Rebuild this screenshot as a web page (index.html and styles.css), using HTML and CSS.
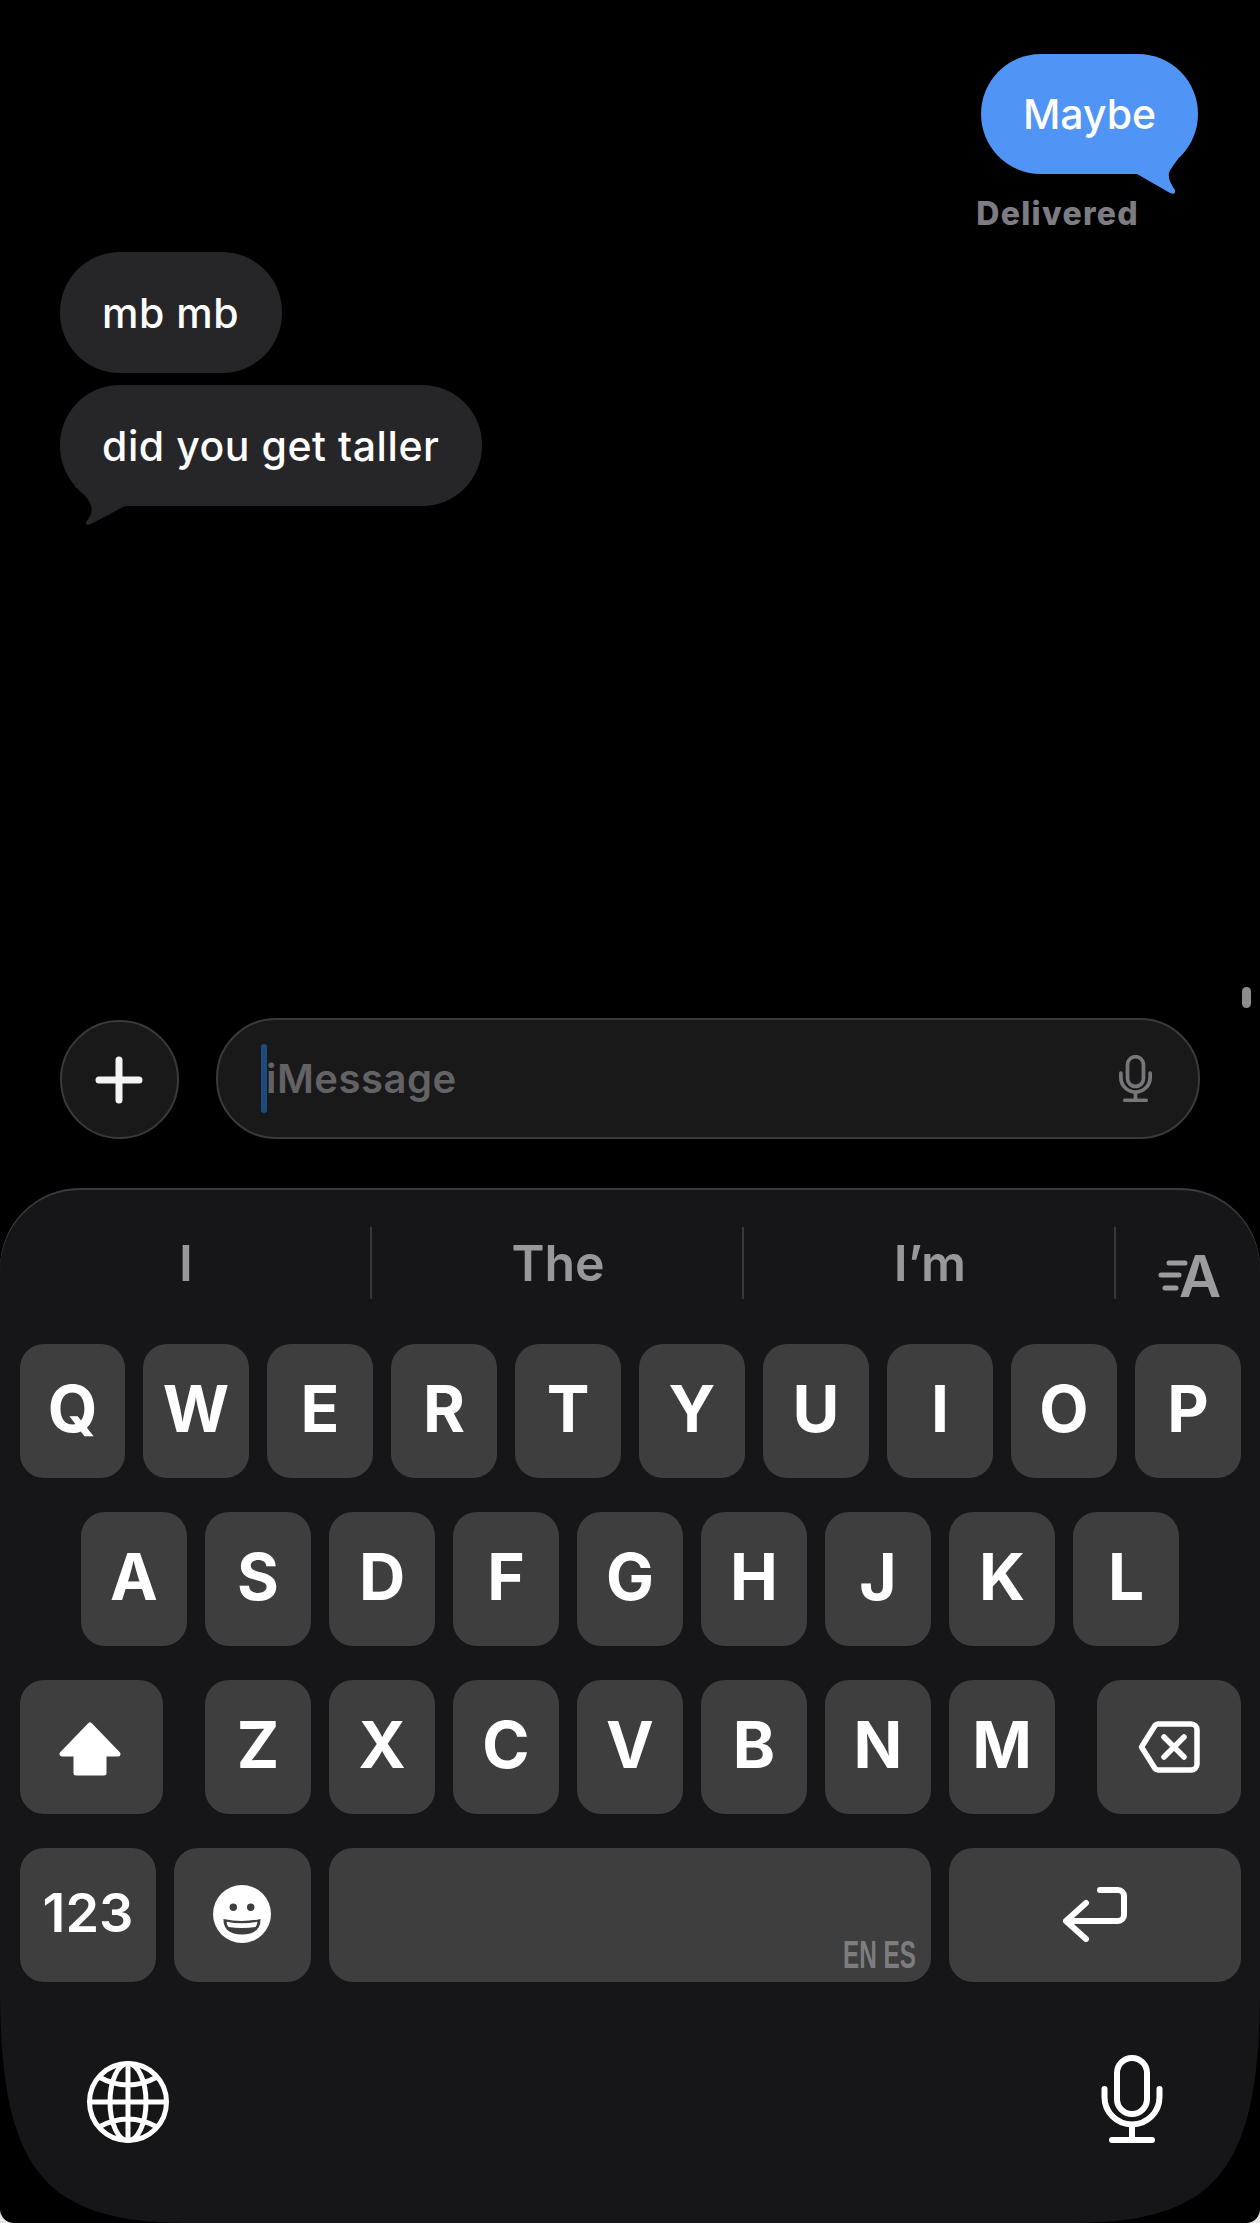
FILE: index.html
```html
<!DOCTYPE html>
<html lang="en">
<head>
<meta charset="utf-8">
<title>iMessage</title>
<link rel="stylesheet" href="styles.css">
</head>
<body>
<div class="screen">
  <div class="thread">
    <div class="bubble sent">Maybe
      <svg class="tail tail-sent" viewBox="0 0 70 52"><path d="M9 28 L42 47 Q48 49.500 47 44 Q37 30 43 23 Q46 18 50 13 L9 4 Z"/></svg>
    </div>
    <div class="status">Delivered</div>
    <div class="bubble received first">mb mb</div>
    <div class="bubble received">did you get taller
      <svg class="tail tail-received" viewBox="0 0 70 52"><path d="M65 30 L32 47.500 Q25 51 26 46 Q35 36 30 27 Q27 20 14 10 L65 10 Z"/></svg>
    </div>
  </div>
  <div class="scroll-thumb"></div>
  <div class="composer">
    <div class="plus">
      <svg class="plus-icon" viewBox="0 0 48 48"><path d="M24 4 V44 M4 24 H44"/></svg>
    </div>
    <div class="field">
      <span class="caret"></span>
      <span class="placeholder">iMessage</span>
      <svg class="mic mic-small" viewBox="0 0 62 88"><rect x="16" y="3" width="30" height="56" rx="15"/><path d="M3.500 34 V42 a27.500 27.500 0 0 0 55 0 V34 M31 70 V85 M11 85 H51"/></svg>
    </div>
  </div>
  <div class="keyboard">
    <div class="candidates">
      <div class="candidate">I</div>
      <div class="candidate">The</div>
      <div class="candidate">I’m</div>
      <div class="format">
        <svg class="format-icon" viewBox="0 0 62 46"><path d="M10 10 H26 M2 22 H20 M6 35 H17"/><text x="20" y="44">A</text></svg>
      </div>
    </div>
    <div class="rows">
      <div class="row">
        <div class="key key-first">Q</div><div class="key">W</div><div class="key">E</div><div class="key">R</div><div class="key">T</div><div class="key">Y</div><div class="key">U</div><div class="key">I</div><div class="key">O</div><div class="key">P</div>
      </div>
      <div class="row row-center">
        <div class="key">A</div><div class="key">S</div><div class="key">D</div><div class="key">F</div><div class="key">G</div><div class="key">H</div><div class="key">J</div><div class="key">K</div><div class="key">L</div>
      </div>
      <div class="row row-split">
        <div class="key key-shift">
          <svg class="shift-icon" viewBox="0 0 62 54"><path d="M31 3 L3 32 H17 V51 H45 V32 H59 Z"/></svg>
        </div>
        <div class="letters">
          <div class="key">Z</div><div class="key">X</div><div class="key">C</div><div class="key">V</div><div class="key">B</div><div class="key">N</div><div class="key">M</div>
        </div>
        <div class="key key-delete">
          <svg class="delete-icon" viewBox="0 0 62 52"><path d="M20 3 H53 a6 6 0 0 1 6 6 V43 a6 6 0 0 1 -6 6 H20 a4 4 0 0 1 -3 -1.500 L3.500 26 L17 4.500 a4 4 0 0 1 3 -1.500 Z"/><path d="M26 16 L46 36 M46 16 L26 36"/></svg>
        </div>
      </div>
      <div class="row">
        <div class="key key-num">123</div>
        <div class="key key-emoji">
          <svg class="emoji-icon" viewBox="-30 -30 60 60">
            <circle class="face" r="29"/>
            <circle class="eye" cx="-8.700" cy="-6.700" r="3.700"/>
            <circle class="eye" cx="8.700" cy="-6.700" r="3.700"/>
            <path class="eye" d="M-18.500 5 Q0 9 18.500 5 Q19 20 0 20.500 Q-19 20 -18.500 5 Z"/>
            <path class="face" d="M-15.500 7.800 Q0 10.800 15.500 7.800 Q15.200 11 13.500 13 Q0 15 -13.500 13 Q-15.200 11 -15.500 7.800 Z"/>
          </svg>
        </div>
        <div class="key key-space"><span class="lang">EN ES</span></div>
        <div class="key key-return">
          <svg class="return-icon" viewBox="0 0 65 55"><path d="M3 34 H55 a6 6 0 0 0 6 -6 V9 a6 6 0 0 0 -6 -6 H37 M23 16 L3 34 L23 52"/></svg>
        </div>
      </div>
    </div>
    <div class="tray">
      <svg class="globe" viewBox="-42 -42 84 84">
        <circle r="38.500"/>
        <ellipse rx="18" ry="38.500"/>
        <path d="M0 -38.500 V38.500 M-38.500 0 H38.500 M-29 -25 Q0 -9 29 -25 M-29 25 Q0 9 29 25"/>
      </svg>
      <svg class="mic mic-large" viewBox="0 0 62 88"><rect x="16" y="3" width="30" height="56" rx="15"/><path d="M3.500 34 V42 a27.500 27.500 0 0 0 55 0 V34 M31 70 V85 M11 85 H51"/></svg>
    </div>
  </div>
</div>
</body>
</html>
```
FILE: styles.css
```css
html {
  background: #e8e8e8;
}

body {
  margin: 0;
  font-family: "Inter", "Liberation Sans", sans-serif;
}

.screen {
  position: relative;
  width: 1260px;
  height: 2223px;
  display: flex;
  flex-direction: column;
  background: #000;
  border-radius: 0 0 14px 14px;
  overflow: hidden;
}

/* Thread */
.thread {
  flex: 1;
  display: flex;
  flex-direction: column;
  align-items: flex-start;
  padding: 54px 62px 0 60px;
}

.bubble {
  position: relative;
  box-sizing: border-box;
  height: 121px;
  padding: 0 43px 0 42px;
  border-radius: 60px;
  display: flex;
  align-items: center;
  font-size: 41px;
  font-weight: 500;
  letter-spacing: 0.55px;
  color: #fff;
}

.sent {
  align-self: flex-end;
  width: 217px;
  height: 120px;
  padding: 0;
  justify-content: center;
  letter-spacing: 0;
  background: #5095f5;
}

.received {
  background: #262629;
}

.first {
  margin-bottom: 12px;
}

.tail {
  position: absolute;
  width: 70px;
  height: 52px;
}

.tail-sent {
  right: 0;
  bottom: -24px;
  fill: #5095f5;
}

.tail-received {
  left: 0;
  bottom: -22px;
  fill: #262629;
}

.status {
  align-self: flex-end;
  margin: 20px 59px 18px 0;
  line-height: 40px;
  font-size: 32px;
  font-weight: 800;
  letter-spacing: 1.3px;
  color: #7c7c82;
}

.scroll-thumb {
  position: absolute;
  left: 1242px;
  top: 987px;
  width: 9px;
  height: 21px;
  border-radius: 5px;
  background: #8e8e90;
}

/* Composer */
.composer {
  display: flex;
  align-items: flex-end;
  gap: 37px;
  padding: 0 60px;
  margin-bottom: 49px;
}

.plus {
  box-sizing: border-box;
  flex: none;
  width: 119px;
  height: 119px;
  display: flex;
  align-items: center;
  justify-content: center;
  border: 2px solid #3a3a3c;
  border-radius: 50%;
  background: #19191a;
}

.plus-icon {
  width: 48px;
  height: 48px;
  margin-right: 2px;
  fill: none;
  stroke: #f4f4f4;
  stroke-width: 7;
  stroke-linecap: round;
}

.field {
  box-sizing: border-box;
  flex: 1;
  height: 121px;
  display: flex;
  align-items: center;
  padding: 0 46px 0 43px;
  border: 2px solid #3a3a3c;
  border-radius: 60px;
  background: #19191a;
}

.caret {
  flex: none;
  width: 6px;
  height: 69px;
  border-radius: 3px;
  background: #1f4a7c;
}

.placeholder {
  flex: 1;
  margin-left: -1px;
  font-size: 40px;
  font-weight: 600;
  letter-spacing: 0.5px;
  color: #636366;
}

.mic {
  flex: none;
  fill: none;
  stroke-linecap: round;
  stroke-width: 6;
}

.mic-small {
  width: 33px;
  height: 47px;
  stroke: #77777a;
  stroke-width: 7;
}

.mic-large {
  width: 62px;
  height: 88px;
  stroke: #fff;
}

/* Keyboard */
.keyboard {
  box-sizing: border-box;
  height: 1035px;
  background: #161618;
  border-radius: 80px 80px 0 0;
  box-shadow: inset 0 2px 0 #3a3a3c;
  clip-path: path("M0 0 H1260 V800 C1260 985 1215 1035 1070 1035 H190 C45 1035 0 985 0 800 Z");
}

.candidates {
  display: flex;
  height: 72px;
  padding-top: 39px;
  margin-bottom: 45px;
}

.candidate {
  box-sizing: border-box;
  width: 372px;
  padding-left: 2px;
  display: flex;
  align-items: center;
  justify-content: center;
  border-right: 2px solid #38383a;
  font-size: 50px;
  font-weight: 600;
  color: #98989b;
}

.format {
  flex: 1;
  display: flex;
  align-items: flex-end;
  padding-left: 43px;
}

.format-icon {
  width: 62px;
  height: 46px;
  overflow: visible;
  stroke: #9c9c9f;
  stroke-width: 5;
  stroke-linecap: round;
  fill: none;
}

.format-icon text {
  font-family: "Inter", sans-serif;
  font-size: 58px;
  font-weight: 600;
  fill: #9c9c9f;
  stroke: none;
}

.rows {
  display: flex;
  flex-direction: column;
  gap: 34px;
  padding: 0 19px 0 20px;
}

.row {
  display: flex;
  gap: 18px;
}

.row-center {
  justify-content: center;
  padding-right: 1px;
}

.row-split {
  justify-content: space-between;
}

.letters {
  display: flex;
  gap: 18px;
}

.key {
  box-sizing: border-box;
  flex: none;
  width: 106px;
  height: 134px;
  padding-bottom: 6px;
  display: flex;
  align-items: center;
  justify-content: center;
  border-radius: 24px;
  background: #3e3e3f;
  font-size: 64px;
  font-weight: 700;
  color: #fff;
}

.key-first {
  width: 105px;
}

.key-shift {
  width: 143px;
  padding-bottom: 0;
}

.key-delete {
  width: 144px;
  padding-bottom: 0;
}

.key-num {
  width: 136px;
  font-size: 54px;
  font-weight: 600;
}

.key-emoji {
  width: 137px;
  padding-bottom: 2px;
}

.key-space {
  width: 602px;
  padding: 0 15px 13px 0;
  align-items: flex-end;
  justify-content: flex-end;
}

.key-return {
  flex: 1;
  padding-bottom: 2px;
}

.lang {
  font-family: "Liberation Sans", sans-serif;
  font-size: 38px;
  line-height: 28px;
  font-weight: 700;
  color: #7d7d7f;
  transform: scaleX(0.64);
  transform-origin: right center;
  white-space: nowrap;
}

.shift-icon {
  width: 62px;
  height: 54px;
  margin: 4px 4px 0 0;
  fill: #fff;
  stroke: #fff;
  stroke-width: 5;
  stroke-linejoin: round;
}

.delete-icon {
  width: 62px;
  height: 52px;
  fill: none;
  stroke: #fff;
  stroke-width: 5.500;
  stroke-linecap: round;
  stroke-linejoin: round;
}

.emoji-icon {
  width: 60px;
  height: 60px;
  margin-right: 1px;
}

.face {
  fill: #fff;
}

.eye {
  fill: #3e3e3f;
}

.return-icon {
  width: 65px;
  height: 55px;
  fill: none;
  stroke: #fff;
  stroke-width: 6;
  stroke-linecap: round;
  stroke-linejoin: round;
}

.tray {
  display: flex;
  justify-content: space-between;
  align-items: flex-start;
  padding: 73px 97px 0 86px;
}

.globe {
  width: 84px;
  height: 84px;
  margin-top: 5px;
  fill: none;
  stroke: #fff;
  stroke-width: 5;
}
```
